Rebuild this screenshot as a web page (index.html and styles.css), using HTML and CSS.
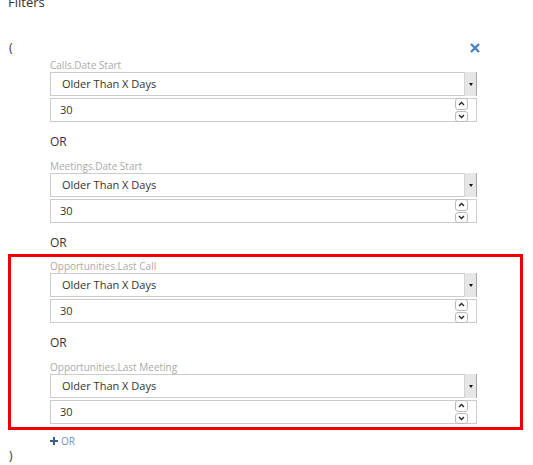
FILE: index.html
```html
<!DOCTYPE html>
<html>
<head>
<meta charset="utf-8">
<link rel="stylesheet" href="styles.css">
</head>
<body>
<div class="page">
  <div class="title">Filters</div>
  <div class="group-head">
    <span class="paren">(</span>
    <span class="remove"><svg width="10" height="10" viewBox="0 0 10 10"><path d="M1 1L9 9M9 1L1 9" stroke="#4a80bf" stroke-width="2.4" stroke-linecap="butt"/></svg></span>
  </div>

  <div class="clauses">
    <div class="clause">
      <div class="label">Calls.Date Start</div>
      <div class="select"><span class="sel-text">Older Than X Days</span><span class="sel-btn"><i class="tri"></i></span></div>
      <div class="num"><span class="num-text">30</span><span class="spin"><span class="sp"><svg width="7" height="5" viewBox="0 0 7 5"><path d="M1 4L3.5 1.5L6 4" fill="none" stroke="#222" stroke-width="1.3"/></svg></span><span class="sp"><svg width="7" height="5" viewBox="0 0 7 5"><path d="M1 1L3.5 3.5L6 1" fill="none" stroke="#222" stroke-width="1.3"/></svg></span></span></div>
    </div>
    <div class="or">OR</div>
    <div class="clause">
      <div class="label">Meetings.Date Start</div>
      <div class="select"><span class="sel-text">Older Than X Days</span><span class="sel-btn"><i class="tri"></i></span></div>
      <div class="num"><span class="num-text">30</span><span class="spin"><span class="sp"><svg width="7" height="5" viewBox="0 0 7 5"><path d="M1 4L3.5 1.5L6 4" fill="none" stroke="#222" stroke-width="1.3"/></svg></span><span class="sp"><svg width="7" height="5" viewBox="0 0 7 5"><path d="M1 1L3.5 3.5L6 1" fill="none" stroke="#222" stroke-width="1.3"/></svg></span></span></div>
    </div>
    <div class="or or-last">OR</div>
  </div>

  <div class="highlight">
    <div class="clause">
      <div class="label">Opportunities.Last Call</div>
      <div class="select"><span class="sel-text">Older Than X Days</span><span class="sel-btn"><i class="tri"></i></span></div>
      <div class="num"><span class="num-text">30</span><span class="spin"><span class="sp"><svg width="7" height="5" viewBox="0 0 7 5"><path d="M1 4L3.5 1.5L6 4" fill="none" stroke="#222" stroke-width="1.3"/></svg></span><span class="sp"><svg width="7" height="5" viewBox="0 0 7 5"><path d="M1 1L3.5 3.5L6 1" fill="none" stroke="#222" stroke-width="1.3"/></svg></span></span></div>
    </div>
    <div class="or">OR</div>
    <div class="clause">
      <div class="label">Opportunities.Last Meeting</div>
      <div class="select"><span class="sel-text">Older Than X Days</span><span class="sel-btn"><i class="tri"></i></span></div>
      <div class="num"><span class="num-text">30</span><span class="spin"><span class="sp"><svg width="7" height="5" viewBox="0 0 7 5"><path d="M1 4L3.5 1.5L6 4" fill="none" stroke="#222" stroke-width="1.3"/></svg></span><span class="sp"><svg width="7" height="5" viewBox="0 0 7 5"><path d="M1 1L3.5 3.5L6 1" fill="none" stroke="#222" stroke-width="1.3"/></svg></span></span></div>
    </div>
  </div>

  <div class="add"><svg class="plus" width="8" height="8" viewBox="0 0 8 8"><path d="M4 0V8M0 4H8" stroke="#3b5f8c" stroke-width="2"/></svg><span>OR</span></div>
  <div class="paren close">)</div>
</div>
</body>
</html>
```

FILE: styles.css
```css
html, body {
  margin: 0;
  padding: 0;
  background: #fff;
}
body {
  font-family: "Open Sans", "Liberation Sans", sans-serif;
  color: #333;
  overflow: hidden;
}
.page {
  padding: 0 10px 0 8px;
}
.title {
  font-size: 13px;
  line-height: 16px;
  margin-top: -6px;
  color: #333;
}
.group-head {
  margin-top: 30px;
  height: 16px;
  display: flex;
  align-items: center;
  justify-content: space-between;
  width: 472px;
}
.paren {
  font-size: 12px;
  line-height: 16px;
  padding-left: 1px;
  color: #333;
}
.remove {
  display: flex;
  width: 10px;
  height: 10px;
  margin-top: -1px;
}
.clauses {
  padding-left: 42px;
  margin-top: 2px;
}
.clause {
  width: 427px;
}
.label {
  font-size: 10px;
  line-height: 14px;
  color: #aaa;
}
.select {
  height: 24px;
  box-sizing: border-box;
  border: 1px solid #ccc;
  display: flex;
  align-items: stretch;
}
.sel-text {
  flex: 1;
  font-size: 11px;
  line-height: 22px;
  padding-left: 11px;
  color: #333;
}
.sel-btn {
  width: 11px;
  background: #e6e6e6;
  border-left: 1px solid #d4d4d4;
  border-right: 1px solid #aaa;
  margin: -1px -1px -1px 0;
  display: flex;
  align-items: center;
  justify-content: center;
}
.tri {
  width: 0;
  height: 0;
  border-left: 2.5px solid transparent;
  border-right: 2.5px solid transparent;
  border-top: 3px solid #111;
}
.num {
  margin-top: 2px;
  height: 24px;
  box-sizing: border-box;
  border: 1px solid #ccc;
  display: flex;
  align-items: stretch;
}
.num-text {
  flex: 1;
  font-size: 11px;
  line-height: 22px;
  padding-left: 9px;
  color: #333;
}
.spin {
  display: flex;
  flex-direction: column;
  gap: 1px;
  margin: -1px 8px -1px 0;
}
.sp {
  width: 13px;
  height: 12px;
  box-sizing: border-box;
  border: 1px solid #bbb;
  border-radius: 3px;
  background: #fff;
  display: flex;
  align-items: center;
  justify-content: center;
}
.or {
  font-size: 12px;
  line-height: 16px;
  margin: 12px 0 9px;
  color: #333;
}
.or-last {
  margin-bottom: 3px;
}
.highlight {
  width: 515px;
  box-sizing: border-box;
  border: 3px solid #f20000;
  padding: 2px 0 3px 39px;
}
.add {
  margin-top: 4px;
  padding-left: 42px;
  height: 14px;
  display: flex;
  align-items: center;
  gap: 3px;
  font-size: 10px;
  color: #6f93bf;
}
.close {
  display: block;
  padding-left: 1px;
  height: 16px;
}
```
